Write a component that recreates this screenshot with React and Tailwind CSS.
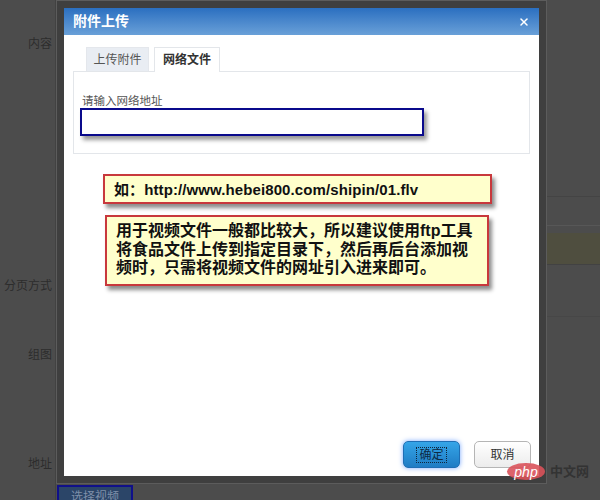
import React from "react";
import { X } from "lucide-react";

const CN_FONT = "font-['Liberation_Sans','Noto_Sans_CJK_SC',sans-serif]";

const Callout = ({ className, children }) => (
  <div
    className={`bg-[#ffffcc] border-2 border-[#c8383c] shadow-[3px_4px_4px_rgba(0,0,0,0.45)] font-bold text-[#111] ${className}`}
  >
    {children}
  </div>
);

const App = () => {
  return (
    <div className={`relative w-[600px] h-[500px] overflow-hidden bg-[#4c4c4c] ${CN_FONT}`}>
      {/* dimmed page behind the dialog */}
      <div className="flex h-full text-[12px] text-[#2c2c2c]">
        <div className="flex flex-col w-[56px] shrink-0 items-end pr-[3px] border-r border-[#424242]">
          <div className="mt-[35px]">内容</div>
          <div className="mt-[224px]">分页方式</div>
          <div className="mt-[51px]">组图</div>
          <div className="mt-[91px]">地址</div>
        </div>
        <div className="flex flex-col flex-1">
          <div className="h-[197px] border-b border-[#444]" />
          <div className="h-[29px] border-b border-[#575757]" />
          <div className="h-[7px]" />
          <div className="h-[32px] bg-[#4f4e3f] border-b border-[#424242]" />
          <div className="h-[52px] border-b border-[#474747]" />
          <div className="flex-1" />
          <div className="ml-[1px] w-[76px] h-[30px] -mb-[15px] bg-[#2b4568] border-2 border-[#10108a] text-center text-[#7f8fa8] pt-[1px]">
            选择视频
          </div>
        </div>
      </div>

      {/* dialog */}
      <div className="absolute left-[56px] top-0 w-[491px] h-[484px] p-[7px] bg-[#3f3f3f] border border-[#5c5c5c]">
        <div className="flex flex-col h-full bg-white">
          <div className="flex items-center justify-between h-[27px] px-[9px] bg-gradient-to-b from-[#2a6fc0] to-[#69a0d8] text-white">
            <span className="text-[14px] font-bold">附件上传</span>
            <X size={12} strokeWidth={3} />
          </div>

          <div className="flex gap-[5px] mt-[12px] ml-[22px] text-[12px]">
            <div className="flex items-center justify-center w-[63px] h-[24px] bg-[#e9edf3] text-[#555] border border-[#e4e7ec] border-b-0">
              上传附件
            </div>
            <div className="flex items-center justify-center w-[66px] h-[25px] -mb-px relative bg-white font-bold text-[#333] border border-[#e3e6ea] border-b-0">
              网络文件
            </div>
          </div>

          <div className="ml-[9px] mr-[9px] h-[83px] border border-[#e3e6ea] pt-[22px] pl-[8px]">
            <div className="text-[11.5px] leading-[14px] text-[#555]">请输入网络地址</div>
            <div className="w-[344px] h-[28px] -ml-[2px] bg-white border-2 border-[#0a0a8c] shadow-[3px_4px_4px_rgba(0,0,0,0.4)]" />
          </div>

          <Callout className="ml-[39px] mt-[20px] w-[389px] h-[30px] pl-[9px] text-[15px] leading-[27px] tracking-[0.1px]">
            如：http://www.hebei800.com/shipin/01.flv
          </Callout>

          <Callout className="ml-[41px] mt-[11px] w-[384px] h-[71px] pl-[9px] pt-[5px] text-[16px] leading-[18.5px]">
            用于视频文件一般都比较大，所以建议使用ftp工具
            <br />
            将食品文件上传到指定目录下，然后再后台添加视
            <br />
            频时，只需将视频文件的网址引入进来即可。
          </Callout>

          <div className="flex justify-end gap-[14px] mt-auto mb-[8px] mr-[8px] text-[12px]">
            <button className="w-[57px] h-[27px] rounded-[5px] bg-gradient-to-b from-[#35a5e8] to-[#1f7cc4] border border-[#1f6fb5] text-[#0d2a44] shadow-[0_0_5px_#7aa8ff]">
              <span className="border border-dotted border-[#10263c] px-[2px]">确定</span>
            </button>
            <button className="w-[57px] h-[27px] rounded-[5px] bg-gradient-to-b from-white to-[#ececec] border border-[#b5b5b5] text-[#333]">
              取消
            </button>
          </div>
        </div>
      </div>

      {/* php.cn watermark */}
      <div className="absolute left-[507px] top-[462px] flex items-center gap-[5px]">
        <div className="flex items-center justify-center w-[38px] h-[17px] rounded-[50%] bg-[#d9525a]/90 text-white text-[14px] italic leading-none">
          php
        </div>
        <span className="text-[13px] font-bold text-[#333]">中文网</span>
      </div>
    </div>
  );
};

export default App;
